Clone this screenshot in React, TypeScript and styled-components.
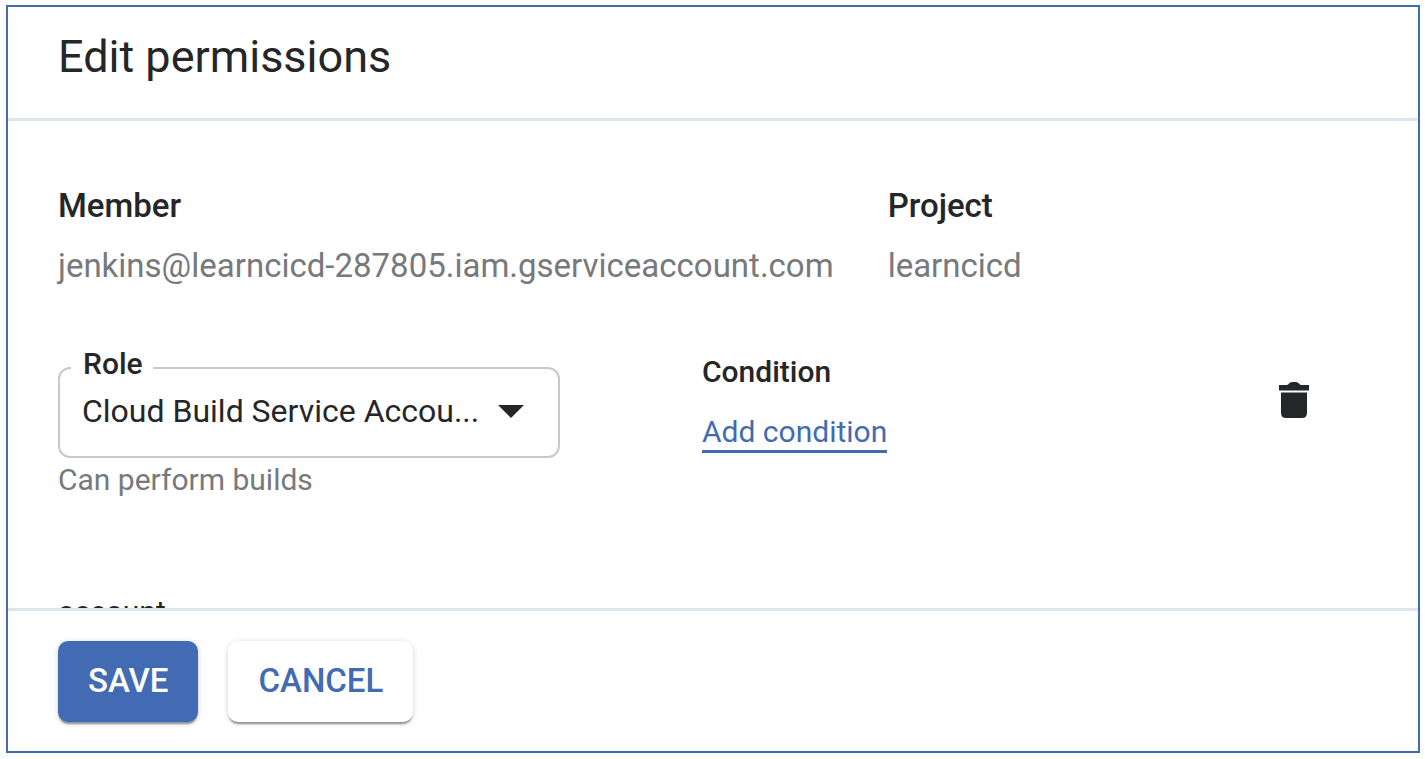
import React from "react";
import styled, { createGlobalStyle } from "styled-components";

const ink = "#252627";
const muted = "#77797c";
const blue = "#426bb3";
const rule = "#dfe5ec";

const GlobalStyle = createGlobalStyle`
  *, *::before, *::after { box-sizing: border-box; }
  body {
    margin: 0;
    background: #fff;
    color: ${ink};
    font-family: Roboto, "Liberation Sans", sans-serif;
  }
`;

const Page = styled.div`
  display: flex;
  height: 100vh;
  padding: 5px 5px 6px 6px;
`;

const Panel = styled.main`
  flex: 1;
  min-width: 0;
  display: flex;
  flex-direction: column;
  border: 2px solid ${blue};
`;

const Header = styled.header`
  padding: 20px 50px 31px;
  border-bottom: 3px solid ${rule};
`;

const Title = styled.h1`
  margin: 0;
  font-size: 45px;
  line-height: 60px;
  font-weight: 400;
`;

const Body = styled.form`
  flex: 1;
  min-height: 0;
  overflow: hidden;
  padding: 65px 108px 0 50px;
`;

const Details = styled.dl`
  display: flex;
  gap: 54px;
  margin: 0;
`;

const Term = styled.dt`
  font-size: 33px;
  line-height: 40px;
  font-weight: 500;
`;

const Value = styled.dd`
  margin: 20px 0 0;
  font-size: 33px;
  line-height: 40px;
  color: ${muted};
`;

const RoleRow = styled.div`
  display: flex;
  align-items: flex-start;
  margin-top: 64px;
`;

const RoleColumn = styled.div`
  width: 502px;
  margin-right: 142px;
`;

const Outline = styled.fieldset`
  min-width: 0;
  height: 108px;
  margin: 0;
  padding: 0 24px 0 11px;
  border: 2px solid #c3c8d1;
  border-radius: 12px;
`;

const Legend = styled.legend`
  padding: 0 10px 8px 12px;
  font-size: 30px;
  line-height: 28px;
  font-weight: 500;
`;

const SelectBox = styled.div`
  position: relative;
  padding: 1px 0 0 11px;
`;

const Select = styled.select`
  display: block;
  width: 100%;
  height: 48px;
  padding: 0;
  border: 0;
  background: transparent;
  color: ${ink};
  font: 400 32px/48px Roboto, "Liberation Sans", sans-serif;
  appearance: none;
`;

const Caret = styled.svg`
  position: absolute;
  right: 10px;
  top: 19px;
  pointer-events: none;
`;

const Hint = styled.p`
  margin: 2px 0 0;
  font-size: 30px;
  line-height: 40px;
  color: ${muted};
`;

const Condition = styled.div`
  font-size: 30px;
  line-height: 36px;
  padding-top: 4px;
`;

const ConditionTitle = styled.div`
  font-weight: 500;
`;

const AddLink = styled.a`
  display: inline-block;
  margin-top: 24px;
  border-bottom: 3px solid ${blue};
  color: ${blue};
  text-decoration: none;
`;

const IconButton = styled.button`
  display: flex;
  margin: 32px 0 0 auto;
  padding: 0;
  border: 0;
  background: transparent;
  color: ${ink};
`;

const NextRole = styled.p`
  margin: 94px 0 0;
  font-size: 30px;
  line-height: 36px;
`;

const Footer = styled.footer`
  display: flex;
  gap: 30px;
  padding: 30px 50px 29px;
  border-top: 3px solid ${rule};
`;

const Button = styled.button<{ $primary?: boolean }>`
  height: 81px;
  padding: 0 30px 2px;
  border: 0;
  border-radius: 10px;
  background: ${(p) => (p.$primary ? blue : "#fff")};
  color: ${(p) => (p.$primary ? "#fff" : blue)};
  font: 500 33px/40px Roboto, "Liberation Sans", sans-serif;
  box-shadow: 0 3px 2px -1px #8f9296, 0 1px 6px #cfd6e0;
`;

export default function App() {
  return (
    <Page>
      <GlobalStyle />
      <Panel>
        <Header>
          <Title>Edit permissions</Title>
        </Header>
        <Body id="permissions">
          <Details>
            <div>
              <Term>Member</Term>
              <Value>jenkins@learncicd-287805.iam.gserviceaccount.com</Value>
            </div>
            <div>
              <Term>Project</Term>
              <Value>learncicd</Value>
            </div>
          </Details>
          <RoleRow>
            <RoleColumn>
              <Outline>
                <Legend>
                  <label htmlFor="role">Role</label>
                </Legend>
                <SelectBox>
                  <Select id="role">
                    <option>Cloud Build Service Accou...</option>
                  </Select>
                  <Caret width="26" height="13" viewBox="0 0 26 13" aria-hidden="true">
                    <path d="M0 0h26L13 13z" fill={ink} />
                  </Caret>
                </SelectBox>
              </Outline>
              <Hint>Can perform builds</Hint>
            </RoleColumn>
            <Condition>
              <ConditionTitle>Condition</ConditionTitle>
              <AddLink href="#condition">Add condition</AddLink>
            </Condition>
            <IconButton type="button" aria-label="Delete role">
              <svg width="32" height="37" viewBox="0 0 32 37" fill="currentColor" aria-hidden="true">
                <path d="M1 3h7q2 0 3-1.500t3-1.500h4q2 0 3 1.500t3 1.500h7v5.500H1z" />
                <path d="M3 10.500h26v20.500q0 5-5 5H8q-5 0-5-5z" />
              </svg>
            </IconButton>
          </RoleRow>
          <NextRole>account</NextRole>
        </Body>
        <Footer>
          <Button $primary type="submit" form="permissions">SAVE</Button>
          <Button type="button">CANCEL</Button>
        </Footer>
      </Panel>
    </Page>
  );
}
